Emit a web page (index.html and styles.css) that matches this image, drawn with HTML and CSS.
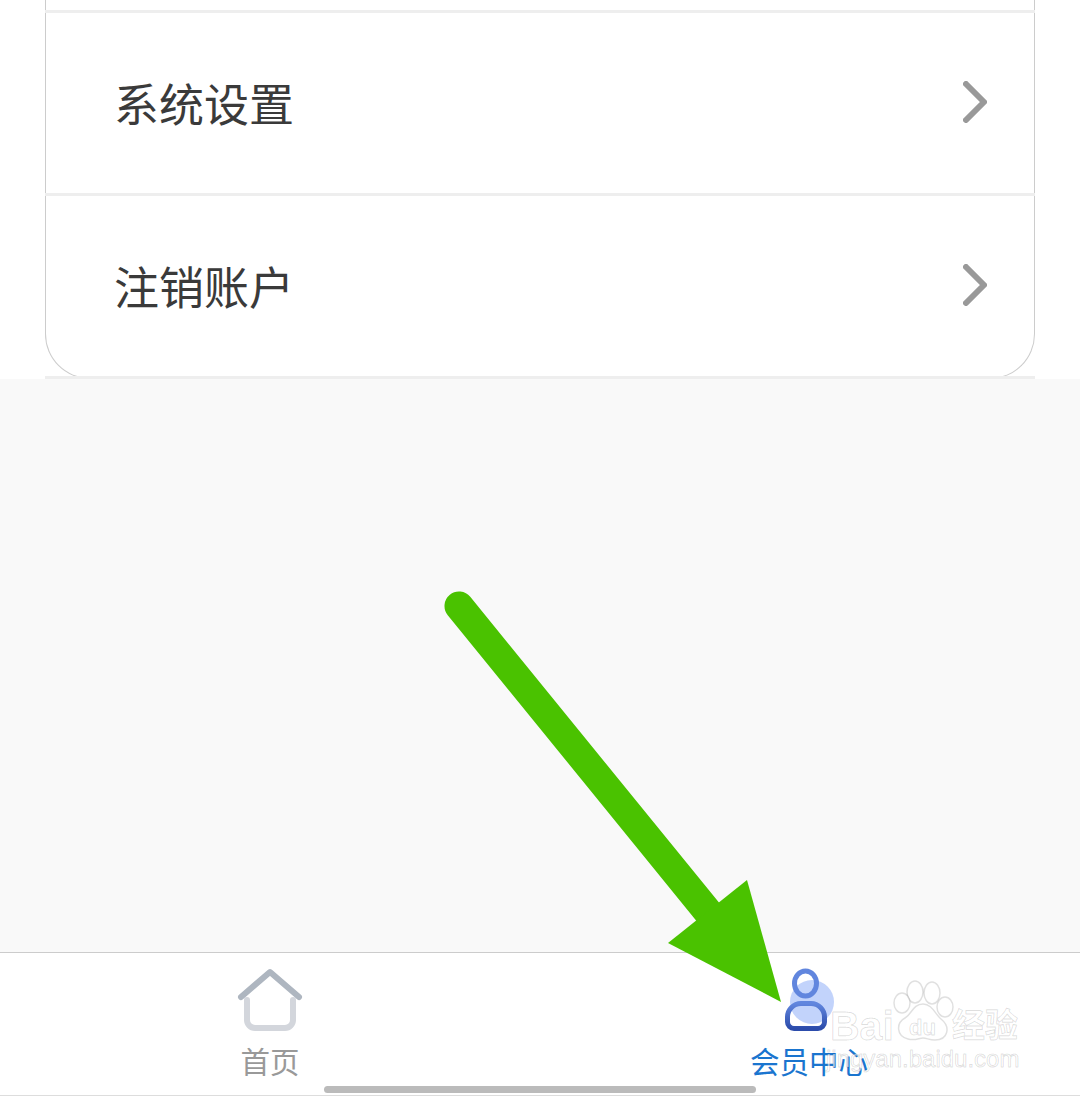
FILE: index.html
```html
<!DOCTYPE html>
<html lang="zh-CN">
<head>
  <meta charset="UTF-8" />
  <title>会员中心</title>
  <link rel="stylesheet" href="styles.css">
</head>
<body>
  <div class="page">

    <div class="list">
      <div class="stub"></div>
      <div class="divider"></div>
      <div class="row">
        <span class="row-label">系统设置</span>
        <svg class="chevron" viewBox="0 0 24 42"><path d="M3 3 L21 21 L3 39" /></svg>
      </div>
      <div class="divider"></div>
      <div class="row row-last">
        <span class="row-label">注销账户</span>
        <svg class="chevron" viewBox="0 0 24 42"><path d="M3 3 L21 21 L3 39" /></svg>
      </div>
      <div class="divider"></div>
    </div>

    <div class="filler"></div>

    <div class="tabbar">
      <div class="tab">
        <svg class="tab-icon" viewBox="0 0 70 70">
          <path class="home-body" d="M12 34 V54 a8 8 0 0 0 8 8 H50 a8 8 0 0 0 8 -8 V34" />
          <path class="home-roof" d="M6 31 L35 6 L64 31" />
        </svg>
        <span class="tab-label">首页</span>
      </div>
      <div class="tab tab-active">
        <svg class="tab-icon" viewBox="0 0 70 70">
          <defs>
            <linearGradient id="bodyGrad" x1="0" y1="0" x2="0" y2="1">
              <stop offset="0" stop-color="#6186de" />
              <stop offset="1" stop-color="#2c4cab" />
            </linearGradient>
          </defs>
          <circle class="user-glow" cx="37" cy="36" r="22" />
          <ellipse class="user-head" cx="30.500" cy="17.500" rx="11" ry="12.500" />
          <path class="user-body" d="M12.500 51 a13.500 13.500 0 0 1 13.500 -13.500 h10 a13.500 13.500 0 0 1 13.500 13.500 v5 a6.500 6.500 0 0 1 -6.500 6.500 h-24 a6.500 6.500 0 0 1 -6.500 -6.500 z" />
        </svg>
        <span class="tab-label">会员中心</span>
      </div>
    </div>

    <div class="home-indicator"></div>

    <svg class="arrow" viewBox="0 0 1080 1096">
      <line x1="459" y1="606" x2="712" y2="917" />
      <polygon points="747,880 781,1002 668,943" />
    </svg>

    <svg class="watermark" viewBox="0 0 210 100">
      <ellipse class="paw" cx="25" cy="17" rx="8" ry="11" />
      <ellipse class="paw" cx="42" cy="18" rx="8" ry="11" />
      <ellipse class="paw" cx="12" cy="28" rx="8" ry="10" />
      <ellipse class="paw" cx="55" cy="32" rx="8" ry="10" />
      <path class="paw" d="M33 29 C42 29 45 39 51 44 C61 52 58 65 45 65 C39 65 37 63 33 63 C29 63 25 66 18 64 C6 61 6 48 15 43 C22 39 23 29 33 29 Z" />
      <text class="wm-latin" x="-60" y="65">Bai</text>
      <text class="wm-du" x="19" y="60">du</text>
      <text class="wm-cjk" x="62" y="62">经验</text>
      <text class="wm-url" x="-64" y="92">jingyan.baidu.com</text>
    </svg>

  </div>
</body>
</html>
```

FILE: styles.css
```css
html, body {
  margin: 0;
  padding: 0;
  background-color: #fff;
  font-family: "Noto Sans CJK SC", "Noto Sans", sans-serif;
}
.page {
  position: relative;
  width: 1080px;
  height: 1096px;
  overflow: hidden;
  display: flex;
  flex-direction: column;
}

/* settings list */
.list {
  padding: 0 45px;
  background-color: #fff;
}
.stub {
  height: 10px;
  border-left: 1px solid #ccc;
  border-right: 1px solid #ccc;
}
.divider {
  height: 3px;
  background-color: #eee;
}
.row {
  height: 180px;
  box-sizing: border-box;
  padding: 0 47px 0 68px;
  display: flex;
  align-items: center;
  justify-content: space-between;
  border-left: 1px solid #ccc;
  border-right: 1px solid #ccc;
}
.row-last {
  height: 183px;
  margin-bottom: -3px;
  padding-bottom: 3px;
  border-bottom: 1px solid #ccc;
  border-radius: 0 0 45px 45px;
}
.row-label {
  font-size: 45px;
  line-height: 60px;
  color: #3a3a3a;
}
.chevron {
  width: 24px;
  height: 42px;
  margin-top: -2px;
  fill: none;
  stroke: #999;
  stroke-width: 6;
  stroke-linecap: round;
  stroke-linejoin: round;
}

.filler {
  flex: 1;
  background-color: #f9f9f9;
}

/* bottom tabs */
.tabbar {
  height: 142px;
  display: flex;
  background-color: #fff;
  border-top: 1px solid #ccc;
  border-bottom: 1px solid #ddd;
}
.tab {
  flex: 1;
  display: flex;
  flex-direction: column;
  align-items: center;
  padding-top: 13px;
}
.tab-icon {
  width: 70px;
  height: 70px;
  fill: none;
}
.tab-label {
  font-size: 29.500px;
  line-height: 40px;
  margin-top: 4px;
  color: #999;
}
.tab-active .tab-label {
  margin-right: 2px;
  color: #1a75cf;
}
.home-roof {
  stroke: #aeb6c0;
  stroke-width: 6;
  stroke-linecap: round;
  stroke-linejoin: round;
}
.home-body {
  stroke: #d3d6dc;
  stroke-width: 6;
  stroke-linecap: round;
}
.user-glow {
  fill: #c2d3fb;
}
.user-head {
  stroke: #6186de;
  stroke-width: 5;
}
.user-body {
  stroke: url(#bodyGrad);
  stroke-width: 5;
}

.home-indicator {
  position: absolute;
  left: 324px;
  top: 1086px;
  width: 432px;
  height: 7px;
  border-radius: 4px;
  background-color: #bbb;
}

/* annotation drawn over the screenshot */
.arrow {
  position: absolute;
  left: 0;
  top: 0;
  width: 1080px;
  height: 1096px;
  pointer-events: none;
}
.arrow line {
  stroke: #4ac200;
  stroke-width: 29;
  stroke-linecap: round;
}
.arrow polygon {
  fill: #4ac200;
}

.watermark {
  position: absolute;
  left: 890px;
  top: 975px;
  width: 210px;
  height: 100px;
  overflow: visible;
}
.paw {
  fill: rgba(255, 255, 255, 0.6);
  stroke: rgba(0, 0, 0, 0.12);
  stroke-width: 1.500;
}
.watermark text {
  fill: rgba(255, 255, 255, 0.6);
  stroke: rgba(0, 0, 0, 0.13);
  stroke-width: 1;
}
.wm-latin {
  font-family: "Liberation Sans", sans-serif;
  font-size: 41px;
  font-weight: bold;
}
.wm-du {
  font-family: "Liberation Sans", sans-serif;
  font-size: 22px;
  font-weight: bold;
}
.wm-cjk {
  font-family: "Noto Sans CJK SC", sans-serif;
  font-size: 33px;
  font-weight: bold;
}
.wm-url {
  font-family: "Liberation Sans", sans-serif;
  font-size: 24px;
}
```
